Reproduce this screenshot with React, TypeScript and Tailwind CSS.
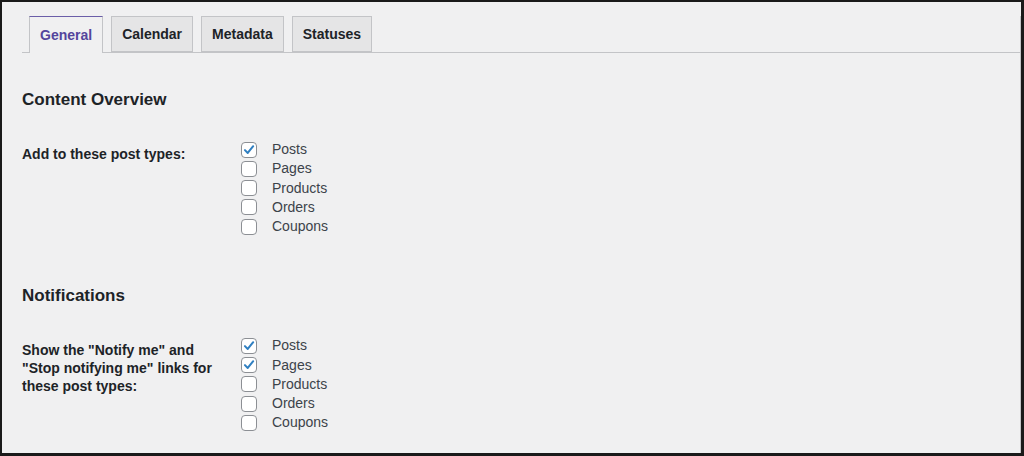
const tabs = ['General', 'Calendar', 'Metadata', 'Statuses'];
const postTypes = ['Posts', 'Pages', 'Products', 'Orders', 'Coupons'];

const Checkbox = ({ checked }: { checked: boolean }) => (
  <span className="flex h-4 w-4 shrink-0 items-center justify-center rounded-[4px] border border-[#8c8f94] bg-white">
    {checked && (
      <svg viewBox="0 0 20 20" className="h-[16px] w-[16px]">
        <path d="M4.2 10.2 L8.2 14.2 L16 4.6" fill="none" stroke="#2f7fc1" strokeWidth="2.9" strokeLinecap="round" strokeLinejoin="round" />
      </svg>
    )}
  </span>
);

const OptionRow = ({ label, checked }: { label: React.ReactNode; checked: string[] }) => (
  <div className="flex">
    <div className="w-[219px] shrink-0 pt-[5px] text-[14px] leading-[18px] font-semibold text-[#1d2327]">{label}</div>
    <div className="flex flex-col">
      {postTypes.map((t) => (
        <label key={t} className="flex h-[19.25px] items-center gap-[15px] text-[14px] text-[#3c434a]">
          <Checkbox checked={checked.includes(t)} />
          <span>{t}</span>
        </label>
      ))}
    </div>
  </div>
);

export default function App() {
  return (
    <div className="h-[456px] w-[1024px] overflow-hidden border-t-2 border-r-[3px] border-b-[3px] border-l-2 border-[#1a1a1a] bg-[#f0f0f1] font-['Liberation_Sans',sans-serif]">
      <div className="h-full border-r border-b border-[#c3c4c7] pl-5">
        {/* Tabs */}
        <div className="mt-[14px] flex gap-2 border-b border-[#c3c4c7] pl-[7px]">
          {tabs.map((tab, i) => (
            <div
              key={tab}
              className={
                i === 0
                  ? '-mb-px flex h-[37px] items-center border border-b-0 border-[#c3c4c7] border-t-[#6b5ea8] bg-[#f0f0f1] px-[10px] text-[14px] font-semibold text-[#54459c]'
                  : '-mb-px flex h-[36px] items-center border border-[#c3c4c7] bg-[#e5e5e6] px-[10px] text-[14px] font-semibold text-[#1d2327]'
              }
            >
              {tab}
            </div>
          ))}
        </div>

        {/* Content Overview */}
        <h2 className="mt-[36px] text-[17px] leading-[22px] font-semibold text-[#1d2327]">Content Overview</h2>
        <div className="mt-[29px]">
          <OptionRow label="Add to these post types:" checked={['Posts']} />
        </div>

        {/* Notifications */}
        <h2 className="mt-[49px] text-[17px] leading-[22px] font-semibold text-[#1d2327]">Notifications</h2>
        <div className="mt-[29px]">
          <OptionRow
            label={
              <>
                Show the "Notify me" and
                <br />
                "Stop notifying me" links for
                <br />
                these post types:
              </>
            }
            checked={['Posts', 'Pages']}
          />
        </div>
      </div>
    </div>
  );
}
